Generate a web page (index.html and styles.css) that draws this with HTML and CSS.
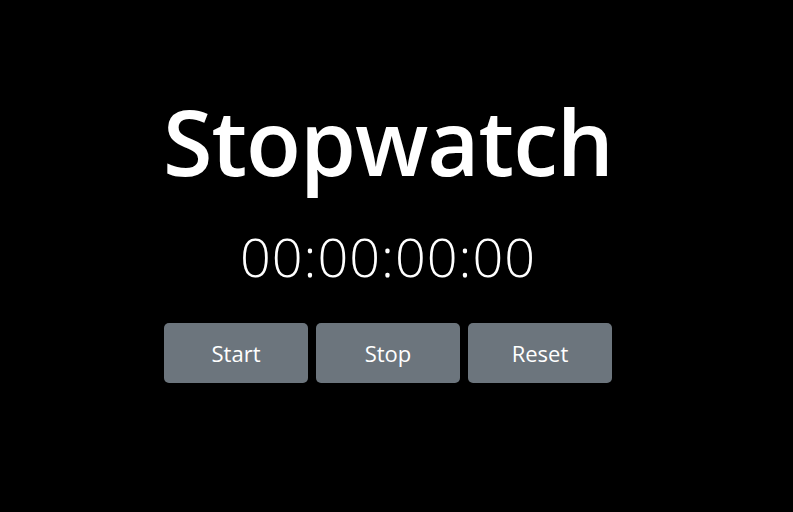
FILE: index.html
```html
<!DOCTYPE html>
<html>
<head>
<meta charset="utf-8">
<link rel="stylesheet" href="styles.css">
</head>
<body>
<main class="app">
  <h1 class="title">Stopwatch</h1>
  <div class="time">00:00:00:00</div>
  <div class="controls">
    <button class="btn">Start</button>
    <button class="btn">Stop</button>
    <button class="btn">Reset</button>
  </div>
</main>
</body>
</html>
```
FILE: styles.css
```css
html, body {
  margin: 0;
  padding: 0;
  background: #000;
  color: #fff;
  font-family: "Open Sans", "Noto Sans", sans-serif;
}
.app {
  display: flex;
  flex-direction: column;
  align-items: center;
  padding-top: 87px;
  padding-right: 17px;
}
.title {
  margin: 0;
  font-size: 90px;
  font-weight: 600;
  line-height: 1.2;
  letter-spacing: -1px;
}
.time {
  margin-top: 29px;
  font-size: 54px;
  font-weight: 350;
  line-height: 1.2;
  letter-spacing: 1px;
}
.controls {
  display: flex;
  gap: 8px;
  margin-top: 34px;
}
.btn {
  width: 144px;
  height: 60px;
  border: none;
  border-radius: 5px;
  background: #6c757d;
  color: #fff;
  font-family: inherit;
  font-size: 22px;
  font-weight: 400;
  padding: 0;
}
```
